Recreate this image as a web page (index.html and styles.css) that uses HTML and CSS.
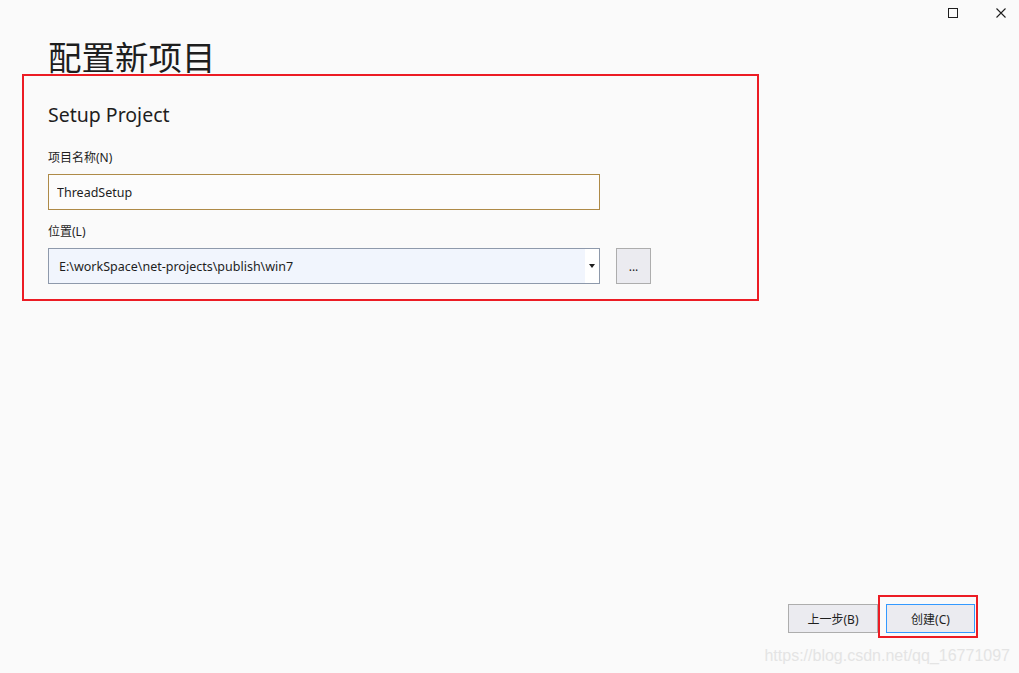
FILE: index.html
```html
<!DOCTYPE html>
<html lang="zh-CN">
<head>
  <meta charset="UTF-8">
  <title>配置新项目</title>
  <link rel="stylesheet" href="styles.css">
</head>
<body>
  <div class="window">
    <div class="controls">
      <span class="ctl-max"></span>
      <svg class="ctl-close" width="10" height="10" viewBox="0 0 10 10">
        <path d="M0.5 0.5 L9.5 9.5 M9.5 0.5 L0.5 9.5" stroke="#1e1e1e" stroke-width="1.1" fill="none"/>
      </svg>
    </div>

    <h1 class="title">配置新项目</h1>

    <div class="panel">
      <h2>Setup Project</h2>

      <div class="field">
        <label for="name">项目名称(N)</label>
        <input type="text" id="name" class="name-input" value="ThreadSetup">
      </div>

      <div class="field">
        <label for="location">位置(L)</label>
        <div class="location-row">
          <div class="combo">
            <input type="text" id="location" value="E:\workSpace\net-projects\publish\win7">
            <span class="combo-drop"><span class="arrow"></span></span>
          </div>
          <button class="browse">...</button>
        </div>
      </div>
    </div>

    <div class="footer">
      <button class="btn btn-back">上一步(B)</button>
      <div class="mark">
        <button class="btn btn-create">创建(C)</button>
      </div>
    </div>

    <div class="watermark">https://blog.csdn.net/qq_16771097</div>
  </div>
</body>
</html>
```

FILE: styles.css
```css
body {
  margin: 0;
  background-color: #fafafa;
  font-family: 'Noto Sans', 'Noto Sans CJK SC', sans-serif;
  color: #1e1e1e;
}

.window {
  position: relative;
  width: 1019px;
  height: 673px;
  display: flex;
  flex-direction: column;
  overflow: hidden;
}

.controls {
  display: flex;
  justify-content: flex-end;
  align-items: center;
  gap: 38px;
  padding: 8px 13px 0 0;
  height: 10px;
}

.ctl-max {
  width: 8px;
  height: 8px;
  border: 1px solid #1e1e1e;
}

.title {
  margin: 20px 0 0 48px;
  font-family: 'Noto Sans CJK SC', sans-serif;
  font-size: 33.5px;
  font-weight: 400;
  line-height: 36px;
  height: 36px;
}

.panel {
  width: 709px;
  margin-left: 22px;
  border: 2px solid #ec1c24;
  padding: 26px 0 15px 24px;
}

.panel h2 {
  margin: 0 0 22px;
  font-size: 19.5px;
  font-weight: 400;
  line-height: 26px;
}

.field {
  margin-bottom: 14px;
}

.field:last-child {
  margin-bottom: 0;
}

.field label {
  display: block;
  font-size: 12px;
  line-height: 16px;
  margin-bottom: 8px;
}

.field input {
  font-family: inherit;
  font-size: 12.5px;
  color: #1e1e1e;
  outline: none;
}

.name-input {
  box-sizing: border-box;
  width: 552px;
  height: 36px;
  padding: 0 8px;
  border: 1px solid #ae8a47;
  background-color: #fcfcfc;
}

.location-row {
  display: flex;
  align-items: flex-start;
  gap: 16px;
}

.combo {
  box-sizing: border-box;
  width: 552px;
  height: 36px;
  display: flex;
  border: 1px solid #8e99ab;
}

.combo input {
  flex: 1;
  border: none;
  padding: 0 10px;
  background-color: #f1f5fd;
}

.combo-drop {
  width: 14px;
  display: flex;
  align-items: center;
  justify-content: center;
  background-color: #fff;
}

.arrow {
  width: 0;
  height: 0;
  border-left: 3px solid transparent;
  border-right: 3px solid transparent;
  border-top: 4px solid #1e1e1e;
}

.browse {
  box-sizing: border-box;
  width: 35px;
  height: 36px;
  padding: 0;
  border: 1px solid #adadad;
  background-color: #ebebf0;
  font-family: inherit;
  font-size: 12px;
  color: #1e1e1e;
}

.footer {
  margin-top: auto;
  display: flex;
  justify-content: flex-end;
  align-items: flex-start;
  padding: 0 41px 35px 0;
}

.btn {
  box-sizing: border-box;
  width: 89px;
  height: 29px;
  border: 1px solid #adadad;
  background-color: #ebebf0;
  font-family: inherit;
  font-size: 12px;
  color: #1e1e1e;
  padding: 0;
}

.btn-back {
  margin-top: 9px;
  width: 90px;
}

.mark {
  border: 2px solid #ec1c24;
  padding: 7px 1px 3px 6px;
}

.btn-create {
  border-color: #3399ff;
}

.watermark {
  position: absolute;
  right: 9px;
  bottom: 8px;
  font-family: 'Liberation Sans', Arial, sans-serif;
  font-size: 16px;
  color: #e4e4e4;
}
```
